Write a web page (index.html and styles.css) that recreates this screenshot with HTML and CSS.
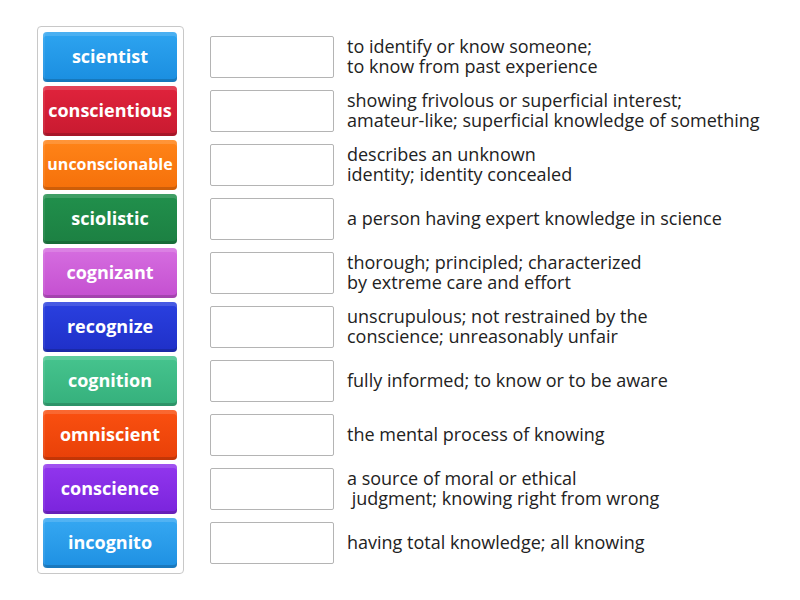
FILE: index.html
```html
<!DOCTYPE html>
<html lang="en">

<head>
    <meta charset="UTF-8">
    <meta name="viewport" content="width=device-width, initial-scale=1.0">
    <title>Match up</title>
    <link rel="stylesheet" href="styles.css">
</head>

<body>
    <div class="game">
        <div class="tiles">
            <div class="tile c-blue">scientist</div>
            <div class="tile c-red">conscientious</div>
            <div class="tile c-orange small">unconscionable</div>
            <div class="tile c-green">sciolistic</div>
            <div class="tile c-violet">cognizant</div>
            <div class="tile c-navy">recognize</div>
            <div class="tile c-teal">cognition</div>
            <div class="tile c-fire">omniscient</div>
            <div class="tile c-purple">conscience</div>
            <div class="tile c-sky">incognito</div>
        </div>

        <div class="targets">
            <div class="row">
                <div class="drop"></div>
                <div class="desc">to identify or know someone;<br>to know from past experience</div>
            </div>
            <div class="row">
                <div class="drop"></div>
                <div class="desc">showing frivolous or superficial interest;<br>amateur-like; superficial knowledge of something</div>
            </div>
            <div class="row">
                <div class="drop"></div>
                <div class="desc">describes an unknown<br>identity; identity concealed</div>
            </div>
            <div class="row">
                <div class="drop"></div>
                <div class="desc">a person having expert knowledge in science</div>
            </div>
            <div class="row">
                <div class="drop"></div>
                <div class="desc">thorough; principled; characterized<br>by extreme care and effort</div>
            </div>
            <div class="row">
                <div class="drop"></div>
                <div class="desc">unscrupulous; not restrained by the<br>conscience; unreasonably unfair</div>
            </div>
            <div class="row">
                <div class="drop"></div>
                <div class="desc">fully informed; to know or to be aware</div>
            </div>
            <div class="row">
                <div class="drop"></div>
                <div class="desc">the mental process of knowing</div>
            </div>
            <div class="row">
                <div class="drop"></div>
                <div class="desc">a source of moral or ethical<br>&nbsp;judgment; knowing right from wrong</div>
            </div>
            <div class="row">
                <div class="drop"></div>
                <div class="desc">having total knowledge; all knowing</div>
            </div>
        </div>
    </div>
</body>

</html>
```

FILE: styles.css
```css
body {
    margin: 0;
    background: #fff;
    font-family: "Open Sans", "Liberation Sans", sans-serif;
}

.game {
    display: flex;
    align-items: flex-start;
    padding: 26px 0 0 37px;
}

.tiles {
    display: flex;
    flex-direction: column;
    gap: 4px;
    width: 134px;
    padding: 5px 6px 5px 5px;
    border: 1px solid #c8c8c8;
    border-radius: 4px;
}

.tile {
    box-sizing: border-box;
    height: 50px;
    padding-bottom: 3px;
    display: flex;
    align-items: center;
    justify-content: center;
    color: #fff;
    font-weight: 700;
    font-size: 18px;
    border-radius: 4px;
    box-shadow: inset 0 4px rgba(255, 255, 255, 0.14),
                inset 2px 0 rgba(255, 255, 255, 0.08),
                inset 0 -3px rgba(0, 0, 0, 0.16);
    white-space: nowrap;
    overflow: hidden;
}

.tile.small {
    font-size: 16px;
}

.c-blue   { background: linear-gradient(#2ea4f0, #1a8ee0); }
.c-red    { background: linear-gradient(#e0233c, #c81a30); }
.c-orange { background: linear-gradient(#ff8418, #f5700a); }
.c-green  { background: linear-gradient(#21904c, #1c8042); }
.c-violet { background: linear-gradient(#d66ee0, #c44fd0); }
.c-navy   { background: linear-gradient(#2a40e0, #1f30c8); }
.c-teal   { background: linear-gradient(#46c48e, #35b07c); }
.c-fire   { background: linear-gradient(#fa5010, #e84008); }
.c-purple { background: linear-gradient(#9236ee, #7a24dc); }
.c-sky    { background: linear-gradient(#36a8f2, #1e90e2); }

.targets {
    display: flex;
    flex-direction: column;
    margin-left: 26px;
    padding-top: 4px;
}

.row {
    height: 54px;
    display: flex;
    align-items: center;
}

.drop {
    width: 122px;
    height: 40px;
    border: 1px solid #b4b4b4;
    border-radius: 2px;
    background: #fff;
}

.desc {
    margin-left: 13px;
    padding-bottom: 3px;
    font-size: 18px;
    line-height: 20px;
    color: #222;
    white-space: nowrap;
}
```
